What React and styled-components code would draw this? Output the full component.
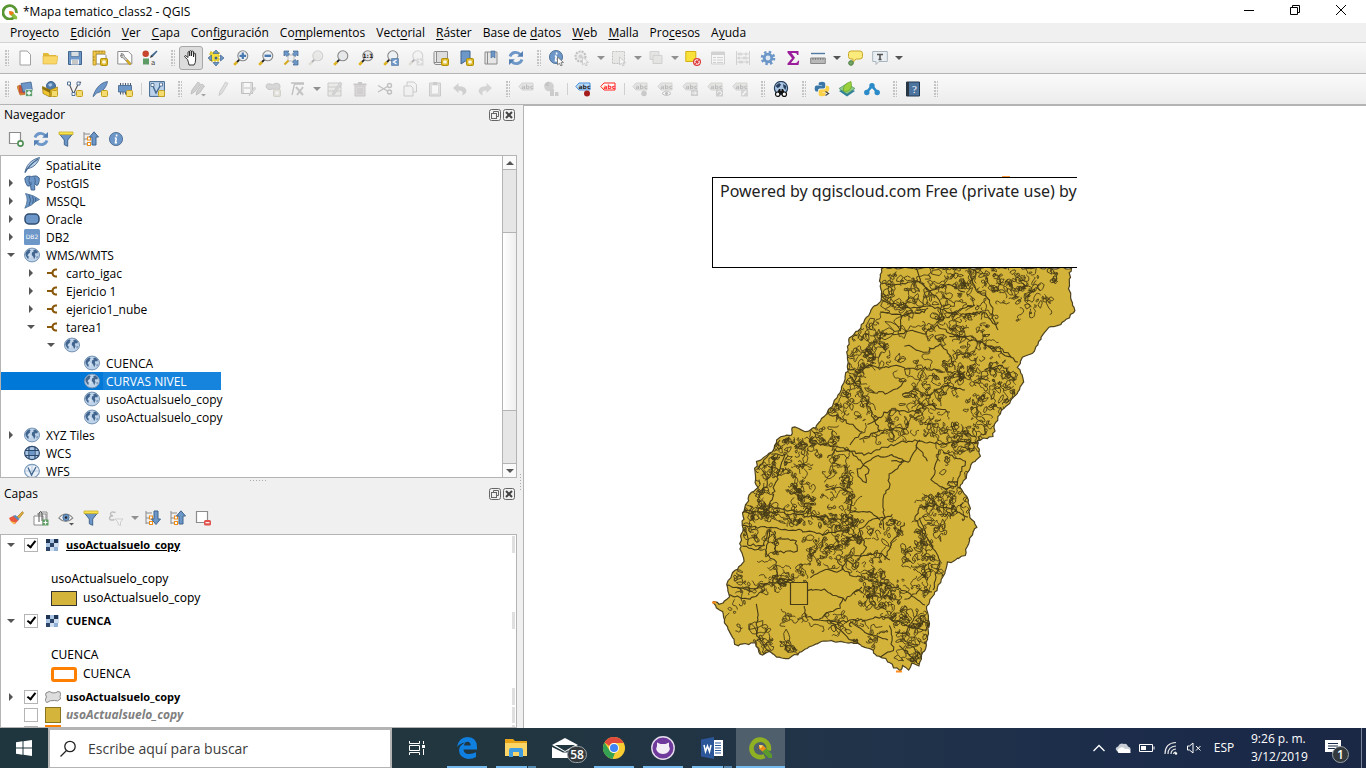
import React from "react";
import styled, { createGlobalStyle, css } from "styled-components";

const UI = `"Open Sans", "Noto Sans", sans-serif`;

const Global = createGlobalStyle`
  *, *::before, *::after { box-sizing: border-box; }
  body { margin: 0; background: #f0f0f0; font: 12px/18px ${UI}; color: #000; }
  button { border: 0; padding: 0; margin: 0; background: none; font: inherit; color: inherit; }
  svg { display: block; flex: none; }
`;

/* ---------- window frame ---------- */
const Screen = styled.div`
  display: flex;
  flex-direction: column;
  height: 100vh;
  overflow: hidden;
`;
const TitleBar = styled.header`
  display: flex;
  align-items: center;
  gap: 5px;
  height: 23px;
  padding-left: 2px;
  background: #fff;
  flex: none;
`;
const Title = styled.h1`
  flex: 1;
  margin: 0;
  font: 12px/18px ${UI};
`;
const WindowButton = styled.button`
  width: 46px;
  height: 20px;
  display: grid;
  place-items: center;
`;
const WindowButtons = styled.div`
  display: flex;
  align-self: flex-start;
  padding-right: 2px;
`;
const MenuBar = styled.nav`
  display: flex;
  gap: 11px;
  height: 19px;
  padding-left: 10px;
  flex: none;
`;
const MenuItem = styled.button`
  line-height: 20px;
  white-space: nowrap;
  u { text-underline-offset: 2px; }
`;

/* ---------- toolbars ---------- */
const ToolBar = styled.div`
  display: flex;
  align-items: center;
  gap: 1px;
  height: 31px;
  flex: none;
  border-top: 1px solid ${(p) => (p.$strong ? "#b4b4b4" : "#d4d4d4")};
  background: linear-gradient(#fafafa, #ececec);
`;
const Grip = styled.span`
  width: ${(p) => (p.$first ? 12 : 15)}px;
  height: 16px;
  padding-right: 3px;
  display: flex;
  justify-content: flex-end;
  &::after {
    content: "";
    width: 4px;
    background: radial-gradient(circle at 1px 1px, #c4c4c4 1px, transparent 1px) 0 0 / 3px 3px;
  }
`;
const Separator = styled.span`
  width: 6px;
  height: 12px;
  display: flex;
  justify-content: center;
  &::after { content: ""; width: 1px; background: #d0d0d0; }
`;
const ToolButton = styled.button`
  width: 24px;
  height: 24px;
  display: grid;
  place-items: center;
  border-radius: 3px;
  ${(p) => p.$pressed && css`background: #dcdcdc; border: 1px solid #a8a8a8;`}
  &:disabled svg { opacity: 0.32; filter: grayscale(0.85); }
`;
const DropButton = styled.button`
  width: 11px;
  height: 24px;
  display: grid;
  place-items: center;
`;

/* ---------- docks ---------- */
const Workspace = styled.main`
  display: flex;
  flex: 1;
  min-height: 0;
  border-top: 1px solid #b4b4b4;
`;
const DockArea = styled.div`
  display: flex;
  flex-direction: column;
  width: 517px;
  flex: none;
`;
const Dock = styled.section`
  display: flex;
  flex-direction: column;
  flex: ${(p) => (p.$grow ? "1 1 0" : "none")};
  min-height: 0;
`;
const DockHead = styled.header`
  display: flex;
  align-items: center;
  gap: 2px;
  height: 20px;
  padding: 0 2px 0 4px;
`;
const DockTitle = styled.h2`
  flex: 1;
  margin: 0;
  font: 12px/20px ${UI};
`;
const DockTools = styled.div`
  display: flex;
  align-items: center;
  gap: 1px;
  height: 30px;
  padding: 0 0 2px 4px;
`;
const DockBody = styled.div`
  display: flex;
  flex: ${(p) => (p.$grow ? "1 1 0" : "none")};
  height: ${(p) => (p.$grow ? "auto" : "323px")};
  min-height: 0;
  overflow: hidden;
  border: 1px solid #b4b4b4;
  background: #fff;
`;
const Tree = styled.ul`
  flex: 1;
  margin: 0;
  padding: 0;
  list-style: none;
  overflow: hidden;
`;
const TreeRow = styled.li`
  display: flex;
  align-items: center;
  width: ${(p) => (p.$selected ? "220px" : "auto")};
  height: 18px;
  padding-left: ${(p) => 2 + p.$level * 20}px;
  white-space: nowrap;
  ${(p) => p.$selected && css`
    background: #0078d7;
    color: #fff;
  `}
`;
const RowIcon = styled.span`
  width: 16px;
  margin: 0 3px 0 5px;
`;
const RowText = styled.span`
  flex: 1;
  height: 18px;
  padding-left: 3px;
  line-height: 20px;
  ${(p) => p.$selected && css`background: #1683dc;`}
`;
const Expander = styled.button`
  width: 16px;
  height: 16px;
  display: grid;
  place-items: center;
`;
const ScrollBar = styled.div`
  display: flex;
  flex-direction: column;
  width: 14px;
  border-left: 1px solid #b4b4b4;
  background: #e6e6e6;
`;
const ScrollStep = styled.button`
  height: 13px;
  display: grid;
  place-items: center;
  background: #fafafa;
`;
const ScrollTrack = styled.div`
  flex: 1;
  border: solid #b4b4b4;
  border-width: 1px 0;
  padding: 62px 0 52px;
`;
const ScrollThumb = styled.div`
  height: 100%;
  border: solid #b4b4b4;
  border-width: 1px 0;
  background: linear-gradient(90deg, #fff, #eee);
`;
const DotsRow = styled.div`
  height: 6px;
  display: flex;
  justify-content: center;
  align-items: flex-start;
  padding-top: 2px;
  &::after {
    content: "";
    width: 17px;
    height: 1px;
    background: repeating-linear-gradient(90deg, #aaa 0 1px, transparent 1px 3px);
  }
`;
const Splitter = styled.div`
  width: 6px;
  flex: none;
  display: flex;
  justify-content: center;
  padding-top: 369px;
  &::after {
    content: "";
    width: 1px;
    height: 17px;
    background: repeating-linear-gradient(#aaa 0 1px, transparent 1px 3px);
  }
`;

/* ---------- layer panel ---------- */
const LayerHead = styled.div`
  display: flex;
  align-items: center;
  height: ${(p) => (p.$compact ? 18 : 19)}px;
  padding: 1px 1px 1px 2px;
  &::after {
    content: "";
    width: 3px;
    align-self: stretch;
    background: #e0e0e0;
  }
`;
const LayerLabel = styled.label`
  flex: 1;
  padding-left: 5px;
  font-size: 11px;
  font-weight: 700;
  text-decoration: ${(p) => (p.$active ? "underline" : "none")};
  ${(p) => p.$muted && css`
    color: #808080;
    font-size: 12px;
    font-style: italic;
  `}
`;
const Check = styled.input`
  appearance: none;
  flex: none;
  width: 14px;
  height: 14px;
  margin: 0 7px 0 5px;
  display: grid;
  place-items: center;
  border: 1px solid #b4b4b4;
  background: #fff;
  &:checked::before {
    content: "";
    width: 5px;
    height: 9px;
    margin-bottom: 2px;
    border: solid #000;
    border-width: 0 2px 2px 0;
    transform: rotate(38deg);
  }
`;
const Legend = styled.div`
  padding: 15px 0 4px 50px;
  font: 12px/20px "Noto Sans", "DejaVu Sans", sans-serif;
`;
const LegendItem = styled.div`
  display: flex;
  align-items: center;
  gap: 6px;
  height: 18px;
`;
const Swatch = styled.span`
  width: 26px;
  height: 15px;
  background: ${(p) => p.$fill};
  border: ${(p) => p.$border};
  border-radius: ${(p) => (p.$round ? "3px" : "0")};
`;
const SquareSwatch = styled.span`
  display: block;
  width: 16px;
  height: 16px;
  background: ${(p) => p.$fill};
  border: ${(p) => p.$border};
`;

/* ---------- canvas ---------- */
const Canvas = styled.section`
  flex: 1;
  min-width: 0;
  overflow: hidden;
  border-left: 1px solid #b4b4b4;
  border-top: 1px solid #b4b4b4;
  background: #fff;
  padding: 71px 0 0 188px;
`;
const MapSheet = styled.div`
  position: relative;
  width: 366px;
`;
const Notice = styled.div`
  height: 91px;
  padding: 2px 0 0 7px;
  overflow: hidden;
  white-space: nowrap;
  border: 1px solid #000;
  border-right: 0;
  margin-right: 1px;
  color: #222;
  font: 16px/22px "Noto Sans", "Open Sans", sans-serif;
`;
const TopMark = styled.span`
  position: absolute;
  top: -1px;
  left: 290px;
  width: 8px;
  height: 1px;
  background: #ff9a3c;
`;

/* ---------- task bar ---------- */
const TaskBar = styled.footer`
  display: flex;
  align-items: stretch;
  height: 40px;
  flex: none;
  color: #fff;
  background: linear-gradient(90deg, #20363e, #22363f 35%, #20334a 65%, #1b2b4a 85%, #1a2745);
`;
const StartButton = styled.button`
  width: 48px;
  display: grid;
  place-items: center;
`;
const SearchBox = styled.label`
  display: flex;
  align-items: center;
  gap: 10px;
  width: 344px;
  padding-left: 10px;
  background: #fff;
  border: 2px solid #b4b4b4;
  border-bottom-width: 1px;
`;
const SearchInput = styled.input`
  flex: 1;
  min-width: 0;
  border: 0;
  outline: 0;
  background: none;
  font: 14px/20px ${UI};
  &::placeholder { color: #3c3c3c; opacity: 1; }
`;
const TaskButton = styled.button`
  position: relative;
  width: ${(p) => (p.$wide ? 50 : 49)}px;
  display: grid;
  place-items: center;
  background: ${(p) => (p.$active ? "#4f606c" : "none")};
`;
const Running = styled.span`
  position: absolute;
  bottom: 0;
  left: ${(p) => (p.$full ? "0" : "5px")};
  right: ${(p) => (p.$full ? "0" : "4px")};
  height: 2px;
  background: ${(p) => (p.$stack ? "linear-gradient(90deg, #76b9ed 0 31px, #22363f 31px 32px, #5689b0 32px)" : "#76b9ed")};
`;
const Badge = styled.span`
  position: absolute;
  left: ${(p) => p.$left}px;
  top: ${(p) => p.$top}px;
  min-width: ${(p) => (p.$wide ? 20 : 17)}px;
  height: 17px;
  border: 1px solid #9aa2a6;
  border-radius: 9px;
  background: #33393d;
  font: 600 12px/15px ${UI};
  text-align: center;
`;
const Tray = styled.div`
  display: flex;
  align-items: center;
  margin-left: auto;
`;
const TrayButton = styled.button`
  position: relative;
  width: ${(p) => p.$w || 24}px;
  height: 40px;
  display: grid;
  place-items: center;
`;
const Clock = styled.time`
  width: 54px;
  margin-left: 8px;
  text-align: center;
  white-space: nowrap;
  font: 12px/18px ${UI};
`;
const ShowDesktop = styled.button`
  width: 5px;
  height: 40px;
  border-left: 1px solid #7b8494;
`;

/* ---------- icons ---------- */
const B = "#6d97c8";
const D = "#41658d";
const G = "#8c8c8c";
const Star = () => (
  <g>
    <rect x="8.5" y="8.5" width="7" height="7" rx="1" fill="#d9b316" stroke="#b08f0a" />
    <path d="M12 9.5v5M9.8 10.8l4.4 2.4M14.2 10.8l-4.4 2.4" stroke="#fff" strokeWidth="1" />
  </g>
);
const YBox = () => <rect x="9.5" y="9.5" width="6" height="6" rx="1" fill="#f5dc72" stroke="#c3a01c" />;
const Lens = ({ fill = "#eef1f3" }) => (
  <g>
    <path d="M1.200 14.800 4 12" stroke="#e0b420" strokeWidth="2.600" />
    <path d="m4 12 2.400-2.400" stroke="#222" strokeWidth="1.800" />
    <circle cx="9.800" cy="5.800" r="5" fill={fill} stroke="#888" strokeWidth="1.100" />
  </g>
);
const Globe = () => (
  <g>
    <ellipse cx="8" cy="8" rx="7.500" ry="6.900" fill="#bfd4ea" stroke="#7593b4" strokeWidth="1" />
    <path d="M1.500 6q1.500-3 4-3.800l1.200 1.200-1 1 .3 1.200-1.800 1.400-.7 1.500 1.300 1.200-.6 2.600-1.500-2L1.500 8z" fill="#41658d" />
    <path d="M8 5.500l1.800-1L9.200 3l2.300-.5 2.500 2.300-.8 1.700-1.600-.5-.8 1.400.7 1.600-1.300 3.300-1-2.800L7.800 8z" fill="#41658d" />
    <path d="M12.500 9.500h1.600l-1.300 2z" fill="#41658d" />
    <path d="M5 7.500 7 9l-1 2" stroke="#dfe9f4" strokeWidth=".8" />
  </g>
);
const Tag = ({ c = "#c9c3a6", t = "#444", s = "#99927a" }) => (
  <g>
    <path d="M.8 5.500 4 2h11v7H4z" fill={c} stroke={s} />
    <text x="9.500" y="7.800" fontSize="6" fontWeight="700" fontFamily="DejaVu Sans" textAnchor="middle" fill={t}>abc</text>
  </g>
);
const Tree3 = ({ up }) => (
  <g>
    <path d="M1 1v13M1 3h6M1 8h4M1 13h4" stroke="#8a8a8a" fill="none" />
    <rect x="4.500" y="6" width="3" height="3" fill="#fff" stroke="#ef8c14" />
    <rect x="4.500" y="11.500" width="3" height="3" fill="#fff" stroke="#ef8c14" />
    <path d={up ? "M11 .8 15.500 6H13v8H9V6H6.500z" : "M11 14.500 15.500 9H13V1H9v8H6.500z"} fill={B} stroke={D} />
  </g>
);
const Refresh = () => (
  <g fill="none" stroke={B} strokeWidth="2.800">
    <path d="M2 6.500C3.500 2 9 1 12.500 4.500" />
    <path d="M14 9.500C12.500 14 7 15 3.500 11.500" />
    <path d="M15 1v5.800H9.200zM1 15V9.200h5.800z" fill="#5580b4" stroke="none" />
  </g>
);
const Funnel = () => (
  <g>
    <path d="M1.500 3h13L9.700 9v6.300l-3.400-1.600V9z" fill={B} stroke={D} />
    <path d="M1 1h14v2.600H1z" fill="#f7e34c" stroke="#c9ae28" strokeWidth=".8" />
  </g>
);
const Info = () => (
  <g>
    <circle cx="8" cy="8" r="6.600" fill={B} stroke={D} strokeWidth=".8" />
    <path d="M8.600 3.500v2M8.300 7l-.8 4.800h1.500M6.800 7h1.500" stroke="#fff" strokeWidth="1.600" fill="none" />
  </g>
);
const Cursor = () => <path d="m8.500 7 6 5.500-2.600.2 1.300 2.600-1.500.6-1.200-2.600-2 1.500z" fill="#fff" stroke="#777" strokeWidth=".9" />;
const Pencil = () => <path d="m4 14.500.8-4L10.500 1 13 2.500l-6 9.800z" fill="#b7b7a0" stroke="#666" strokeWidth=".8" />;
const Doc = () => <path d="M3 1h7l3.500 3.500V15H3z" fill="#fff" stroke="#a0a0a0" />;
const Q = () => (
  <g>
    <path d="M13 12.500a6.700 6.700 0 1 1 1.400-3.500" fill="none" stroke="#589632" strokeWidth="2.800" />
    <path d="m7.500 7.500 2.600.3 5 5v2.400h-2.600l-4.700-5z" fill="#8cbf3d" />
    <path d="m7 7 3.500.5 1.500 1.500-3 2.500-1.600-1.500z" fill="#ee7913" />
  </g>
);

const ICONS = {
  new: <Doc />,
  open: <g><path d="M1 3h5l1.500 2H14v9H1z" fill="#e3b93a" /><path d="M1 6h15l-1.500 8H1z" fill="#f9d768" stroke="#d9ac32" strokeWidth=".6" /></g>,
  save: <g><path d="M1.500 1.500h13v13h-13z" fill={B} stroke={D} /><path d="M4 1.500h8v5H4z" fill="#d9dee3" stroke={D} strokeWidth=".6" /><path d="M4 9.500h8v5H4z" fill="#f5f5f5" /><path d="M5 11h6M5 13h6" stroke="#999" /></g>,
  layout: <g><path d="M4 4h8.500l1.500 1.500V14H4z" fill="#fff" stroke={G} /><path d="M1 1h12v2.800H4V15H1z" fill="#efc94c" stroke="#b78f1c" strokeWidth=".8" /><path d="M4 1v1.500M7 1v1.500M10 1v1.500M1 7h1.500M1 10h1.500" stroke="#8d6d12" strokeWidth=".8" /><Star /></g>,
  layouts: <g><path d="M.8 1.500h10.500l3.500 3.500V14H.8z" fill="#fff" stroke={G} /><path d="M4 3.500q3-.5 3.500 3L13.500 13q.5 2-1.500 1.500L6.500 8Q3 8 3.500 5L5.500 6z" fill="#d8d8d8" stroke="#777" strokeWidth=".8" /><path d="m9.500 10 4 4.500" stroke="#d4a91d" strokeWidth="2.200" /></g>,
  style: <g><circle cx="3.700" cy="3.700" r="3.200" fill="#c6452c" /><path d="M1 8.500h6v6H1z" fill="#5e9c66" /><path d="m9 5.500 5.500-5 1 1L10.500 7z" fill={D} /><path d="M8 8 9 5l1.800 1.800z" fill="#333" /><text x="9" y="14.500" fontSize="7" fontFamily="DejaVu Sans" fill="#444">a</text></g>,
  hand: <path d="M4.500 9.500 2 7.200q-1-1.400.5-1.700L5 7.500V2q.8-1 1.700 0v4V1q1-1 1.800 0v5l.3-4.500q1-1 1.700 0V7l.5-3.500q1-1 1.600.2V10q0 3-1.600 5h-5Q5.500 12 4.500 9.500z" fill="#fff" stroke="#222" strokeWidth=".9" />,
  pan: <g><path d="M2 2h9v9H2z" fill="#f5dd3a" stroke="#cbb01c" strokeDasharray="2 1" /><path d="m8 0 3 3.500H5zM8 16l3-3.500H5zM0 8l3.500-3v6zM16 8l-3.500-3v6z" fill={B} stroke={D} strokeWidth=".7" /><circle cx="8" cy="8" r="1.500" fill={D} /></g>,
  zoomIn: <g><Lens /><path d="M9.800 2.500v6.600M6.500 5.800h6.600" stroke="#4a78b0" strokeWidth="2.200" /></g>,
  zoomOut: <g><Lens /><path d="M6.500 5.800h6.600" stroke="#4a78b0" strokeWidth="2.400" /></g>,
  zoomFull: <g><path d="M5 5h6v6H5z" fill="#f1f1f1" stroke="#aaa" strokeWidth=".7" /><path d="m1.500 14.500 4-4" stroke="#d4a91d" strokeWidth="2" /><path d="M1 1h5L4.800 2.200 6.500 4 4 6.500 2.200 4.800 1 6zM15 1h-5l1.200 1.200L9.500 4 12 6.500l1.800-1.700L15 6zM15 15h-5l1.200-1.200L9.500 12 12 9.500l1.800 1.700L15 10z" fill={B} stroke={D} strokeWidth=".7" /></g>,
  lensGray: <g><Lens fill="#d6d2b0" /></g>,
  lens: <Lens fill="#e6e8ea" />,
  zoom11: <g><Lens fill="#e6e6e6" /><text x="9.800" y="8.300" fontSize="6" fontWeight="700" fontFamily="DejaVu Sans" textAnchor="middle" fill="#222">1:1</text></g>,
  zoomPrev: <g><Lens /><path d="M8.500 8.500h7v7h-7z" fill={B} stroke={D} strokeWidth=".5" /><path d="m13.500 10-3 2 3 2" fill="none" stroke="#fff" strokeWidth="1.400" /></g>,
  zoomNext: <g><Lens /><path d="M8.500 8.500h7v7h-7z" fill="#aaa" /><path d="m10.500 10 3 2-3 2" fill="none" stroke="#fff" strokeWidth="1.400" /></g>,
  newMap: <g><path d="M3.500 1.500h11v11h-11z" fill="#ddd" stroke={G} /><path d="M1 2.500q0-1.500 2.500-1v11H1zM1 12.500q0 2 2 2h6" fill="#eee" stroke={G} /><Star /></g>,
  newMark: <g><path d="M3 1h9v13l-4.500-3L3 14z" fill={B} stroke={D} /><Star /></g>,
  marks: <g><path d="M2 2h12v12H2z" fill="#e6e6e6" stroke={G} /><path d="M4.500 2v12" stroke={G} /><path d="M8 1h4v7l-2-1.500L8 8z" fill={B} stroke={D} strokeWidth=".6" /></g>,
  refresh: <Refresh />,
  identify: <g><g transform="translate(-1 -1)"><Info /></g><Cursor /></g>,
  action: <g><circle cx="6.500" cy="6.500" r="5" fill="#ddd" stroke="#555" strokeWidth="2" strokeDasharray="2 1" /><circle cx="6.500" cy="6.500" r="2" fill="#888" /><Cursor /></g>,
  select: <g><path d="M1.500 1.500h12v12h-12z" fill="#d9d4a0" stroke="#555" strokeDasharray="2 1" /><Cursor /></g>,
  form: <g><path d="M2 1.500h9v8H2z" fill="#c9c49a" stroke={G} /><path d="M5 5.500h9v8H5z" fill="#c9c9b4" stroke={G} /></g>,
  deselect: <g><path d="M.8 1.500h10v10h-10z" fill="#f8e23a" stroke="#d5b012" /><circle cx="12" cy="12" r="3.400" fill="#fff" stroke="#dd3b3b" strokeWidth="1.300" /><path d="m9.800 14.200 4.500-4.500M10.500 12l1.500-1.500M12 13.500l1.500-1.500" stroke="#dd3b3b" strokeWidth="1.200" /></g>,
  table: <g><path d="M1.500 2h13v12h-13z" fill="#fff" stroke={G} /><path d="M1.500 3.500h13" stroke={G} strokeWidth="3" /><path d="M3 7.500h3M7 7.500h6M3 10h3M7 10h6M3 12.500h3M7 12.500h6" stroke={G} /></g>,
  abacus: <g><path d="M1.500 1v14M14.500 1v14M1 4h14M1 8h14M1 12h14" stroke={G} /><path d="M4 2.500v3M6 2.500v3M11 2.500v3M4 6.500v3M9 6.500v3M11 6.500v3M5 10.500v3M7 10.500v3M12 10.500v3" stroke={G} strokeWidth="1.400" /></g>,
  gear: <g><circle cx="8" cy="8" r="5.700" fill="none" stroke={B} strokeWidth="3.200" strokeDasharray="2.300 2.180" /><circle cx="8" cy="8" r="3.800" fill="#dfe9f4" stroke={B} strokeWidth="2.800" /></g>,
  sigma: <path d="M2.500 1h11v4h-1.200Q12 3 10 3H6.500L10 7.800 6 13h4.500q2 0 2.500-2.300h1.200L13.500 15h-11v-1.500L7 8.300 2.500 2.700z" fill="#9b1d9b" />,
  measure: <g><path d="M1 3.500h14" stroke="#4f7ba5" strokeWidth="1.400" /><path d="M.7 8h14.600v5.500H.7z" fill="#b9b9b9" stroke="#888" /><path d="M3 8v2M5.500 8v2M8 8v2M10.500 8v2M13 8v2" stroke="#777" strokeWidth=".8" /></g>,
  tip: <g><path d="M4 1h9q2.500 0 2.500 2.500v3Q15.500 9 13 9H9l-3 3.500V9H4Q1.500 9 1.500 6.500v-3Q1.500 1 4 1z" fill="#fbeb7c" stroke="#c9a92a" /><circle cx="4" cy="13" r="2.300" fill="#73a865" stroke="#497a40" /></g>,
  annot: <g><path d="M.7 1.500h14.600v10H7L4 14.500v-3H.7z" fill="#e9eff3" stroke="#a9b4bc" /><path d="M5 4.500h6M8 4v5.500M6.500 9.500h3" stroke="#555" strokeWidth="1.600" /></g>,
  dsm: <g><path d="M0 5.500 3 4l9 9-9 1z" fill="#dc8d30" stroke="#b26a18" strokeWidth=".6" /><path d="m2 4 4 1 4 8-8-1z" fill="#c9563c" /><path d="m4 2.500 10-1.500 1.500 9-9.500 1z" fill={B} stroke={D} strokeWidth=".8" /><rect x="8.500" y="8.500" width="7" height="7" rx="1" fill="#5f9e6d" stroke="#fff" strokeWidth=".6" /><path d="M12 9.800v4.400M9.800 12h4.400" stroke="#fff" strokeWidth="1.400" /></g>,
  gpkg: <g><circle cx="9" cy="5" r="4.500" fill="#4f7bab" stroke={D} /><path d="M6 3.500 9 2l1.500 2L8 6z" fill="#a9c5e3" /><path d="M.5 5.500 8 9v7L1 12.500zM15.500 6 8 9v7l7-3.500z" fill="#f0c530" stroke="#9a7b12" strokeWidth=".7" /><path d="M.5 5.500 8 9v3L.5 8z" fill="#8e6f0e" /><YBox /></g>,
  shp: <g><path d="M2 2.500 6.500 13 11.500 2.500 14 1" fill="none" stroke="#555" strokeWidth="1.100" /><path d="M.5 1h3v3h-3zM5 11.500h3v3H5zM10 1h3v3h-3z" fill="#fff" stroke={D} strokeWidth=".9" /><YBox /></g>,
  spatial: <g><path d="M1 15.500C3 9 7 2 15.500.5 14.500 6 11 11 4.500 12L1.500 15.500z" fill={B} stroke={D} strokeWidth=".8" /><YBox /></g>,
  lite: <g><path d="M1 15.500C2 9 6 3 15.500.5 14 6 10 10.500 4 11.500" fill="#b9d0e8" stroke={D} strokeWidth=".9" /><path d="M1 15.500Q5 8 14 2" stroke={D} fill="none" strokeWidth="1.300" /></g>,
  chip: <g><path d="M3.500 2v11.500M6 2v11.500M8.500 2v11.500M11 2v11.500M13.500 2v9" stroke="#4a5a6c" /><path d="M1.500 4.500h13v6.500h-13z" fill={B} stroke={D} strokeWidth=".8" /><YBox /></g>,
  virt: <g><path d="M.6.600h14.800v14.800H.6z" fill="#bcd2ea" stroke={D} /><path d="M3.500 4 7 12l5-8.500" fill="none" stroke={D} strokeWidth="1.400" /><path d="M2 2.500h3v3H2zM10.500 2h3v3h-3z" fill="#fff" stroke={D} strokeWidth=".8" /><YBox /></g>,
  edits: <g><path d="m1 13 1-4 6-8 2.500 2-6 8z" fill="#888" stroke="#555" /><path d="m6 14 1-4 5-7 2.500 2-5 7z" fill="#888" stroke="#555" /><path d="M11 13h5l-2.500 2.500z" fill="#000" /></g>,
  pencil: <Pencil />,
  saveEdit: <g><path d="M1.500 1.500h11v11h-11z" fill="#aaa" stroke="#555" /><path d="M4 2h6v4H4zM4 8h6v4H4z" fill="#fff" /><path d="m9 15 1-3 4.500-6L16 7.500z" fill="#aaa" stroke="#555" strokeWidth=".6" /></g>,
  addPoly: <g><path d="M1 6q0-4 4-3 3 1.500 5-.5 5-1 5 3t-4 3-6 0-4-2.500z" fill="#999" stroke="#666" /><Star /></g>,
  vertex: <g><path d="M1 2h13M2 14 4.500 3 14 3" stroke="#555" fill="none" strokeWidth="1.300" /><path d="m6 6 7 8M13 6l-6 8" stroke="#666" strokeWidth="2" /></g>,
  modify: <g><path d="M1 2h13v13H1zM1 6h13M1 10h13" fill="#ddd8a8" stroke="#777" /><path d="M5 13 13 1l2 1.500L7 14z" fill="#999" stroke="#666" strokeWidth=".6" /></g>,
  trash: <g><path d="M3 5h10v10H3z" fill="#c99" stroke="#866" /><path d="M1.500 3.500h13M6 2h4" stroke="#866" strokeWidth="1.800" /><path d="M6 7v6M8 7v6M10 7v6" stroke="#866" /></g>,
  cut: <g fill="none" stroke="#555" strokeWidth="1.400"><path d="M1 4.500 10.500 10M1 11l9.500-5.500" /><circle cx="12.500" cy="11" r="2" /><circle cx="12.500" cy="4.500" r="2" /></g>,
  copy: <g><path d="M5 1h7l2.500 2.500V11H5z" fill="#eee" stroke="#777" /><path d="M2 5h7l2 2v8H2z" fill="#eee" stroke="#777" /></g>,
  paste: <g><path d="M2.500 2h11v13h-11z" fill="#bbb" stroke="#777" /><path d="M4.500 4h7v9h-7z" fill="#fff" stroke="#888" strokeWidth=".6" /><path d="M6 1h4v3H6z" fill="#777" /></g>,
  undo: <path d="M1 7 6.500 2v3.300q8 0 8 5.200-1 3-4.500 4 2.500-5-3.500-5V12z" fill="#888" />,
  redo: <path d="M15 7 9.500 2v3.300q-8 0-8 5.200 1 3 4.500 4-2.500-5 3.500-5V12z" fill="#889888" />,
  tag: <Tag />,
  diagram: <g><circle cx="6" cy="5.500" r="4.800" fill="#888" /><path d="M6 5.500V.7a4.800 4.800 0 0 0-4.500 4z" fill="#565" /><path d="M7 8h4v7H7zM12 11h3.500v4H12z" fill="#686" /></g>,
  tagBlue: <g><Tag c="#b8dcff" t="#222" s="#4a90d8" /><circle cx="12" cy="12.500" r="3" fill="#a61c1c" /></g>,
  tagRed: <Tag c="#fff" t="#f22" s="#f22" />,
  tagPin: <g><Tag /><circle cx="12" cy="12.500" r="2.800" fill="#777" /></g>,
  tagEye: <g><Tag /><path d="M5 12.500q4.500-5 9 0-4.500 4-9 0z" fill="#fff" stroke="#555" /><circle cx="9.500" cy="12.500" r="1.400" fill="#444" /></g>,
  tagMove: <g><Tag /><path d="M9 9h7v6H9z" fill="#888" /><path d="M10 12h4M12.500 10.500 14.500 12l-2 1.500" stroke="#fff" fill="none" /></g>,
  tagRot: <g><Tag /><path d="M9 8.500h7v7H9z" fill="#888" /><path d="M10.500 12a2 2 0 1 1 2 2" stroke="#fff" fill="none" /></g>,
  tagEdit: <g><Tag /><path d="M9 8.500h7v7H9z" fill="#999" /><path d="m10.500 14 3.500-4" stroke="#fff" strokeWidth="1.600" /></g>,
  metasearch: <g><circle cx="8" cy="7" r="6.600" fill="#a9c5e3" stroke="#27405e" strokeWidth="1.200" /><path d="M2.500 5 6 2l2 1.500L6.500 6l-2 1zM10 3l3.500 2-1 4-2-2.500z" fill="#27405e" /><path d="M6 8h1.500v2h1V8H10l2.500 5h-9z" fill="#111" /><circle cx="4.700" cy="13.200" r="2.200" fill="#fff" stroke="#111" strokeWidth="1.200" /><circle cx="11.300" cy="13.200" r="2.200" fill="#fff" stroke="#111" strokeWidth="1.200" /></g>,
  python: <g><path d="M8 .8q3.200 0 3.200 2v3q0 1.700-1.700 1.700H6q-2 0-2 2v1H2.500Q.7 10.500.7 7.500t2-3h5.500V4H4.700V2.500Q4.700.8 8 .8z" fill="#3a76a8" /><path d="M8 15.200q-3.300 0-3.300-2v-2.700Q4.700 8.500 6.500 8.500h3.300q2 0 2-2.200V4.700h1.500q2 0 2 3t-2 3.500H8v.5h3.500V13q0 2.200-3.500 2.200z" fill="#fbd147" /><path d="m11.500 10.500 3 2-3 2" stroke="#444" fill="none" strokeWidth="1.200" /></g>,
  cloudPlugin: <g><path d="m0 10 8-4 8 4-8 5.500z" fill="#2f7f9c" /><path d="m0 7.500 8-5 8 5-8 5.500z" fill="#8fc98a" stroke="#3e8b5c" strokeWidth=".6" /><path d="M4.500 10Q3.500 3 12 .5q2 8-4 10z" fill="#9bd13c" stroke="#5e9a1a" strokeWidth=".6" /></g>,
  mesh: <g><path d="M2.500 11.500 8 5l5.500 6.500" fill="none" stroke="#2a8bc8" strokeWidth="2.600" /><circle cx="8" cy="4.800" r="2.700" fill="#2a8bc8" /><circle cx="2.800" cy="11.500" r="2.700" fill="#2a8bc8" /><circle cx="13.200" cy="11.500" r="2.700" fill="#2a8bc8" /></g>,
  help: <g><path d="M1.500 1h13v14h-13z" fill="#4c749f" stroke="#22384f" /><path d="M1.500 1H4v14H1.500z" fill="#2a3642" /><text x="9.500" y="12" fontSize="11" fontFamily="Liberation Serif" textAnchor="middle" fill="#fff">?</text></g>,
  addLayer: <g><path d="M1.500 1.500h11v11h-11z" fill="#fff" stroke={G} strokeWidth="1.200" /><circle cx="12.500" cy="12.500" r="2.600" fill="#fff" stroke="#4f8f55" strokeWidth="1.600" /></g>,
  funnel: <Funnel />,
  collapse: <Tree3 up />,
  expand: <Tree3 />,
  info: <Info />,
  brush: <g><path d="m9 7 5.500-5.500L15.500 3 11 8.500z" fill="#e0b040" stroke="#a87a1c" strokeWidth=".7" /><path d="m1 8 5-2.500 4.500 4.500L7 14q-4-1-6-6z" fill="#e9583c" /><path d="m5 6 5 4.500 1.500-1.500L7.500 5z" fill="#5c88bd" /><path d="m2 11 4 3.500 2-2z" fill="#f3b84f" /></g>,
  group: <g><path d="M1 6h9v9H1z" fill="#fff" stroke={G} /><path d="M4 4h9v9M7 2h7v9" fill="none" stroke={G} /><path d="M6 12V3q1.500-3 3 0v8" fill="none" stroke="#555" /><rect x="9.500" y="9.500" width="6" height="6" fill="#5e9e62" /><path d="M12.500 10.500v4M10.500 12.500h4" stroke="#fff" strokeWidth="1.200" /></g>,
  eye: <g><path d="M.8 8q7-8 14 0-7 7-14 0z" fill="#fff" stroke="#888" strokeWidth="1.100" /><circle cx="8" cy="7.500" r="3.200" fill={B} stroke={D} strokeWidth=".8" /><circle cx="8" cy="7.500" r="1.200" fill="#222" /><path d="M11 13h5l-2.500 2.500z" fill="#555" /></g>,
  expr: <g><path d="M7.500 2.500Q2.500 1 2.500 4q0 1.500 2.500 1.700Q1.500 6 1.500 8.300 2 11 6.500 9.500" stroke="#555" strokeWidth="1.400" /><path d="M7 9h8l-2.500 3v3.500l-2.500-1V12z" fill="#fff" stroke="#888" /></g>,
  remove: <g><path d="M1.500 1.500h11v11h-11z" fill="#fff" stroke={G} strokeWidth="1.200" /><rect x="9" y="10" width="7" height="5.500" rx="1.500" fill="#e2504c" /><path d="M10.500 12.700h4" stroke="#fff" strokeWidth="1.200" /></g>,
  elephant: <g><path d="M.8 3.500Q2 .5 6 1.200q1.500.8 3 0Q13 0 15.200 3q.5 3.500-1.200 6.800l-1.500.7-1-1.500-.8 1.500v4.500H7.200l-.7-4.500-1.500.5L3.500 11Q.8 7 .8 3.500z" fill={B} stroke={D} /><path d="M5.500 2Q4 6 6 9.500l1 .5V7M10.500 2.500q1.500 3 .3 6.500" fill="none" stroke={D} /></g>,
  mssql: <g><path d="M1.500.500Q10 2 15.500 6.500q-4 1.500-8 5.500L.8 15.200Q5 7 1.500.500z" fill={B} stroke={D} strokeWidth=".7" /><path d="M5 2q3 5 0 10.500M8.500 3.500q2 3 0 7M11.500 5q1 2-.5 4" stroke="#36577c" fill="none" strokeWidth=".9" /></g>,
  oracle: <rect x="1" y="3" width="14" height="10" rx="4" fill={B} stroke="#2f4d70" strokeWidth="1.500" />,
  db2: <g><rect x="0" y="0" width="16" height="16" rx="1.500" fill={B} /><text x="8" y="10" fontSize="6" fontFamily="DejaVu Sans" textAnchor="middle" fill="#fff">DB2</text></g>,
  globe: <Globe />,
  conn: <path d="M3 8h6M13 4.500h-1.500Q8.500 5 8.500 8t3 3.500H13" fill="none" stroke="#8a5607" strokeWidth="2" />,
  wcs: <g><ellipse cx="8" cy="8" rx="7.400" ry="6.600" fill="#a9c5e3" stroke="#2c486b" strokeWidth="1.200" /><path d="M1 5.500h14M1 10.500h14M5 2v12M11 2v12" stroke="#2c486b" strokeWidth="1.200" /><path d="M5.500 6h5v4h-5z" fill="#6d97c8" /></g>,
  wfs: <g><ellipse cx="8" cy="8" rx="7.400" ry="6.600" fill="#eaf1f8" stroke="#7a98b9" strokeWidth="1.100" /><path d="M1 8h14M8 1.500v13" stroke="#a9c0d8" strokeWidth=".8" /><path d="M4 4.500 7.500 12 12 4" fill="none" stroke={D} strokeWidth="1.300" /></g>,
  raster: <g><path d="M1 2h4v4H1zM9 2h4v4H9z" fill="#1f3352" /><path d="M5 2h4v4H5zM1 6h4v4H1zM13 2h1v4h-1z" fill="#a9c3e2" /><path d="M5 6h4v4H5zM1 10h4v4H1z" fill="#2c4468" /><path d="M9 6h5v4H9zM5 10h4v4H5z" fill="#cfdff0" /><path d="M9 10h4v4H9z" fill="#8fb0d6" /></g>,
  polygon: <path d="M1 4q3-3 7 0 3 0 5-1.500 3 0 2.500 3-1 2 0 4.500-3 3-6 1.500Q5 11 2 13.500-1 12 1.500 8 0 6 1 4z" fill="#ddd" stroke="#888" />,
};

const Icon = ({ name, size = 16 }) => (
  <svg width={size} height={size} viewBox="0 0 16 16" fill="none" aria-hidden="true">{ICONS[name]}</svg>
);
const Caret = ({ color = "#555", dir = "down" }) => (
  <svg width="8" height="8" viewBox="0 0 8 8" aria-hidden="true">
    <path d={{ down: "M0 2h8L4 6z", up: "M0 6h8L4 2z", right: "M2 0v8l4-4z" }[dir]} fill={color} />
  </svg>
);

/* ---------- toolbar contents: "-" disabled, "!" pressed, "|" grip, "/" separator, "v" drop-down, "w" dimmed drop-down ---------- */
const ROW_ONE = "| new open save layout layouts style | !hand pan zoomIn zoomOut zoomFull -lensGray lens zoom11 zoomPrev -zoomNext newMap newMark marks refresh | identify -action w -select w -form w deselect -table -abacus gear sigma measure v tip annot v".split(" ");
const ROW_TWO = "| dsm gpkg shp spatial chip / virt | -edits -pencil -saveEdit -addPoly -vertex w -modify -trash -cut -copy -paste -undo -redo | -tag -diagram / tagBlue tagRed / -tagPin -tagEye -tagMove -tagRot -tagEdit | metasearch | python cloudPlugin mesh | help |".split(" ");

const Tools = ({ items }) =>
  items.map((item, i) => {
    if (item === "|") return <Grip key={i} $first={i === 0} />;
    if (item === "/") return <Separator key={i} />;
    if (item === "v" || item === "w") {
      return <DropButton key={i} aria-label="Más opciones"><Caret color={item === "w" ? "#909090" : "#555"} /></DropButton>;
    }
    const off = item[0] === "-";
    const on = item[0] === "!";
    const name = off || on ? item.slice(1) : item;
    return (
      <ToolButton key={i} disabled={off} $pressed={on} aria-label={name}>
        <Icon name={name} />
      </ToolButton>
    );
  });

const MENUS = ["Pro_yecto", "_Edición", "_Ver", "_Capa", "Con_figuración", "Co_mplementos", "Vect_orial", "_Ráster", "Base de _datos", "_Web", "_Malla", "Pro_cesos", "A_yuda"];
const Mnemonic = ({ text }) => {
  const i = text.indexOf("_");
  return <>{text.slice(0, i)}<u>{text[i + 1]}</u>{text.slice(i + 2)}</>;
};

const SOURCES = [
  [0, "", "lite", "SpatiaLite"],
  [0, "right", "elephant", "PostGIS"],
  [0, "right", "mssql", "MSSQL"],
  [0, "right", "oracle", "Oracle"],
  [0, "right", "db2", "DB2"],
  [0, "down", "globe", "WMS/WMTS"],
  [1, "right", "conn", "carto_igac"],
  [1, "right", "conn", "Ejericio 1"],
  [1, "right", "conn", "ejericio1_nube"],
  [1, "down", "conn", "tarea1"],
  [2, "down", "globe", ""],
  [3, "", "globe", "CUENCA"],
  [3, "", "globe", "CURVAS NIVEL", true],
  [3, "", "globe", "usoActualsuelo_copy"],
  [3, "", "globe", "usoActualsuelo_copy"],
  [0, "right", "globe", "XYZ Tiles"],
  [0, "", "wcs", "WCS"],
  [0, "", "wfs", "WFS"],
];

const PanelHead = ({ title }) => (
  <DockHead>
    <DockTitle>{title}</DockTitle>
    <button aria-label="Desacoplar">
      <svg width="12" height="12" viewBox="0 0 12 12" fill="none" stroke="#666" aria-hidden="true">
        <rect x=".5" y=".5" width="11" height="11" rx="2" /><path d="M4.500 4.500v-2h5v5h-2" /><rect x="2.500" y="4.500" width="5" height="5" />
      </svg>
    </button>
    <button aria-label="Cerrar">
      <svg width="12" height="12" viewBox="0 0 12 12" fill="none" stroke="#666" aria-hidden="true">
        <rect x=".5" y=".5" width="11" height="11" rx="2" /><path d="m3 3 6 6M9 3 3 9" stroke="#444" strokeWidth="2" />
      </svg>
    </button>
  </DockHead>
);

const Browser = () => (
  <Dock>
    <PanelHead title="Navegador" />
    <DockTools><Tools items={["addLayer", "refresh", "funnel", "collapse", "info"]} /></DockTools>
    <DockBody>
      <Tree>
        {SOURCES.map(([level, dir, icon, text, selected], i) => (
          <TreeRow key={i} $level={level} $selected={selected}>
            <Expander aria-label={text} disabled={!dir}>{dir && <Caret dir={dir} />}</Expander>
            <RowIcon><Icon name={icon} /></RowIcon>
            <RowText $selected={selected}>{text}</RowText>
          </TreeRow>
        ))}
      </Tree>
      <ScrollBar>
        <ScrollStep aria-label="Subir"><Caret dir="up" /></ScrollStep>
        <ScrollTrack><ScrollThumb /></ScrollTrack>
        <ScrollStep aria-label="Bajar"><Caret /></ScrollStep>
      </ScrollBar>
    </DockBody>
  </Dock>
);

const Layer = ({ id, dir, checked, active, muted, compact, name, children }) => (
  <LayerHead $compact={compact}>
    <Expander aria-label={name} disabled={!dir}>{dir && <Caret dir={dir} />}</Expander>
    <Check type="checkbox" id={id} defaultChecked={checked} />
    {children}
    <LayerLabel htmlFor={id} $active={active} $muted={muted}>{name}</LayerLabel>
  </LayerHead>
);

const Layers = () => (
  <Dock $grow>
    <PanelHead title="Capas" />
    <DockTools><Tools items={["brush", "group", "eye", "funnel", "-expr", "w", "expand", "collapse", "remove"]} /></DockTools>
    <DockBody $grow>
      <Tree as="div">
        <Layer id="l1" dir="down" checked active name="usoActualsuelo_copy"><Icon name="raster" /></Layer>
        <Legend>
          usoActualsuelo_copy
          <LegendItem><Swatch $fill="#d5b43c" $border="1px solid #333" />usoActualsuelo_copy</LegendItem>
        </Legend>
        <Layer id="l2" dir="down" checked name="CUENCA"><Icon name="raster" /></Layer>
        <Legend>
          CUENCA
          <LegendItem><Swatch $fill="#fff" $border="3px solid #ff7f00" $round />CUENCA</LegendItem>
        </Legend>
        <Layer id="l3" dir="right" checked name="usoActualsuelo_copy"><Icon name="polygon" /></Layer>
        <Layer id="l4" compact muted name="usoActualsuelo_copy"><SquareSwatch $fill="#d5b43c" $border="1px solid #8a7420" /></Layer>
        <Layer id="l5" compact muted checked name=""><SquareSwatch $fill="#fff" $border="3px solid #ff7f00" /></Layer>
      </Tree>
    </DockBody>
  </Dock>
);

/* ---------- map drawing ---------- */
const EDGE = [882,268,880,283,882,300,873,308,867,317,860,328,850,338,847,352,848,368,843,385,837,398,828,411,815,427,807,432,793,427,792,435,778,438,772,452,757,462,755,472,757,488,750,495,743,513,743,528,740,543,743,562,733,573,726,585,730,597,720,604,713,602,715,606,722,612,725,623,730,632,735,645,755,643,760,655,770,652,782,659,792,657,807,648,823,641,840,642,857,644,873,650,877,657,883,657,892,665,899,671,903,665,908,669,912,664,918,665,923,653,927,640,929,623,927,607,935,592,943,577,948,563,965,555,970,538,976,527,971,517,967,497,960,488,968,473,972,463,981,456,977,447,978,440,993,437,996,422,1003,410,1018,392,1024,381,1018,367,1022,358,1033,353,1042,337,1048,328,1060,325,1075,311,1071,297,1069,285,1071,268];

/* centre x, centre y, radius x, radius y, number of parcels, parcel size */
const CLUSTERS = [
  [925,282,42,14,52,5],[1000,280,40,13,80,4],[1025,298,32,12,46,4],[1050,278,16,10,10,4],[905,300,30,14,36,5],[955,305,35,17,50,5],
  [870,330,15,16,26,5],[975,328,26,14,40,4],[940,330,25,12,18,5],[900,325,25,12,8,9],[862,355,14,18,38,4],[885,355,20,12,22,4],
  [975,362,30,18,70,4],[1000,385,18,20,44,4],[955,380,22,18,38,4],[915,375,20,18,20,5],[858,390,14,18,38,4],[845,412,14,14,30,4],
  [925,400,26,14,44,4],[985,410,20,20,46,4],[890,418,35,10,34,4],[935,425,28,10,44,4],[965,432,22,9,30,4],[820,440,20,12,44,4],[880,434,30,8,22,4],
  [800,445,14,12,30,4],[775,460,14,16,46,3],[765,485,10,22,38,3],[797,478,7,26,38,3],[805,495,12,14,34,3],[838,470,12,16,24,4],[842,498,14,16,34,4],
  [758,512,16,8,42,3],[795,517,36,7,60,3],[840,523,26,9,40,4],[757,530,14,10,16,5],[830,540,28,8,26,4],[862,530,14,12,20,5],
  [818,555,14,12,32,3],[845,550,20,14,22,4],[770,560,8,22,18,4],[740,583,10,12,20,4],[775,584,20,6,24,4],[800,575,14,8,16,4],
  [870,565,18,14,30,4],[885,585,20,14,50,3],[915,555,16,16,40,4],[930,575,12,18,22,5],[892,535,12,16,26,4],[930,530,14,18,26,5],
  [940,505,20,12,54,4],[960,498,10,14,20,4],[950,470,14,18,10,9],[975,445,8,6,8,4],[960,447,20,6,20,4],
  [885,605,22,10,38,4],[905,620,20,14,36,4],[845,625,22,8,24,4],[795,622,14,6,14,4],[765,640,8,14,18,4],[788,642,10,10,12,5],
  [750,620,12,12,6,7],[905,648,16,14,24,5],[920,630,8,16,18,4],[868,638,16,6,14,4],[735,605,12,10,8,4],
];

const ROADS = [
  [882,333,895,334,912,331,925,333,937,326,950,333,962,337,980,342,1000,352,1018,362],
  [950,336,970,336,985,345,1000,348,1012,358],
  [848,368,858,372,868,366,880,368,895,366,905,368],
  [873,392,885,393,897,389,905,380],
  [820,443,840,447,865,455,885,447,900,443,915,440,940,444,960,442,977,442],
  [852,452,868,470,865,482,860,480,858,470,875,457,892,455,905,460,890,475,889,485,882,500,884,515,884,530],
  [892,462,910,461,915,452,917,443],
  [772,455,785,455,775,485,770,507,800,512,812,507],
  [743,513,765,512,790,514,820,517,842,520],
  [743,526,770,528,795,530,825,534,850,530],
  [775,531,775,552,796,552,796,540,775,540],
  [770,530,766,555,776,562,777,580],
  [727,585,745,590,770,583,790,583],
  [808,590,825,590,845,600,855,592,862,587],
  [811,577,825,570,840,572,848,560,855,568],
  [805,605,806,617,820,620,835,622,860,620,885,617,905,625,927,630],
  [820,620,828,612,840,608,843,598],
  [757,605,757,635,770,655],
  [940,450,932,480,945,490,955,487,965,462,950,455,943,452],
  [905,523,890,545,885,560],[855,556,880,553,890,560],[920,518,926,535,940,560,933,590],
  [835,558,850,575,870,580,905,590,925,605],
  [890,625,893,650,880,657],[900,645,917,663],[905,640,920,655],
  [901,315,925,312,928,308],[901,330,901,315,880,312],[828,413,845,420,862,432,850,445],
  [893,515,870,520,860,530,866,548,858,560],
  [757,470,768,455,780,440],[762,495,770,475,778,455],[850,375,862,392,870,410,880,432],
  [882,284,900,285,915,280,930,290,950,285,965,292],[880,300,905,308,930,305,950,313,975,305],
  [915,268,922,285,940,300,942,315],[970,270,975,290,990,300,995,325],[960,315,985,312,998,330],
  [905,345,925,352,940,345,950,355,955,370],[905,370,925,368,945,372],[903,395,915,390,930,395,945,385,965,390],
  [868,425,890,410,915,412,930,405,950,412],[860,440,880,430,905,428],[985,370,1002,365,1015,380],
  [828,458,835,450,850,452],[826,490,840,487,852,495,850,512],[850,512,870,512,880,520],
  [745,528,748,545,762,545,768,530],[743,545,755,550,765,545],[928,460,915,445,920,440],
  [925,535,915,520,920,508,935,505,955,510,968,517],[905,600,920,590,932,592],[730,595,750,600,765,590],
  [830,620,850,640,860,645],[855,625,870,635,888,640],[918,612,905,635,895,632],
];

const makeRandom = (seed) => () => {
  seed = (seed * 1664525 + 1013904223) % 4294967296;
  return seed / 4294967296;
};

const roughen = (pts, amount, rnd, closed) => {
  const out = [];
  const n = pts.length / 2;
  for (let i = 0; i < (closed ? n : n - 1); i++) {
    const x1 = pts[i * 2], y1 = pts[i * 2 + 1];
    const j = (i + 1) % n;
    const x2 = pts[j * 2], y2 = pts[j * 2 + 1];
    const steps = Math.max(2, Math.round(Math.hypot(x2 - x1, y2 - y1) / 3));
    for (let k = 0; k < steps; k++) {
      const t = k / steps;
      out.push(`${(x1 + (x2 - x1) * t + (rnd() - 0.5) * amount).toFixed(1)} ${(y1 + (y2 - y1) * t + (rnd() - 0.5) * amount).toFixed(1)}`);
    }
  }
  if (!closed) out.push(`${pts[pts.length - 2]} ${pts[pts.length - 1]}`);
  return `M${out.join("L")}${closed ? "Z" : ""}`;
};

const wander = (rnd, x, y, steps, stride, turn) => {
  let heading = rnd() * Math.PI * 2;
  let bend = 0;
  let path = `M${x.toFixed(1)} ${y.toFixed(1)}`;
  for (let k = 0; k < steps; k++) {
    bend = bend * 0.5 + (rnd() - 0.5) * turn;
    heading += bend;
    x += Math.cos(heading) * stride;
    y += Math.sin(heading) * stride;
    path += `L${x.toFixed(1)} ${y.toFixed(1)}`;
  }
  return path;
};

const parcels = () => {
  const rnd = makeRandom(29);
  const d = [];
  CLUSTERS.forEach(([cx, cy, rx, ry, count, size]) => {
    for (let i = 0; i < count * 0.6; i++) {
      const a = rnd() * Math.PI * 2;
      const r = Math.sqrt(rnd());
      const x = cx + Math.cos(a) * r * rx;
      const y = cy + Math.sin(a) * r * ry;
      if (rnd() < 0.62) {
        d.push(wander(rnd, x, y, 6 + Math.floor(rnd() * size * 4), 1.7, 2.6));
        continue;
      }
      const s = size * (0.3 + rnd() * 0.8);
      const tilt = rnd() * Math.PI;
      const squash = 0.3 + rnd() * 0.5;
      const n = 6 + Math.floor(rnd() * 5);
      const pts = [];
      for (let k = 0; k < n; k++) {
        const t = (k / n) * Math.PI * 2;
        const q = s * (0.5 + rnd() * 0.9);
        const px = Math.cos(t) * q, py = Math.sin(t) * q * squash;
        pts.push(`${(x + px * Math.cos(tilt) - py * Math.sin(tilt)).toFixed(1)} ${(y + px * Math.sin(tilt) + py * Math.cos(tilt)).toFixed(1)}`);
      }
      d.push(`M${pts.join("L")}Z`);
    }
  });
  return d.join("");
};

const outline = roughen(EDGE, 2.2, makeRandom(7), true);
const roads = ROADS.map((r, i) => roughen(r, 2.6, makeRandom(i + 3), false)).join("");
const parcelLines = parcels();

const Basin = () => (
  <svg width="366" height="406" viewBox="712 268 366 406" fill="none" role="img" aria-label="Mapa de uso actual del suelo">
    <clipPath id="basin"><path d={outline} /></clipPath>
    <path d={outline} fill="#d4b33a" stroke="#4c4220" strokeWidth="1.200" />
    <g clipPath="url(#basin)" stroke="#463b18" strokeLinejoin="round">
      <path d={parcelLines} strokeWidth=".9" />
      <path d={roads} strokeWidth="1.100" />
      <path d="M790.500 582.500h17v22h-17z" fill="#d4b33a" strokeWidth="1.200" />
    </g>
    <path d="M712 602.500h4M896 671.500h6" stroke="#ff8c1a" strokeWidth="2" />
  </svg>
);

/* ---------- task bar pictures ---------- */
const TASK_ICONS = {
  view: <svg width="18" height="18" viewBox="0 0 18 18" fill="none" stroke="#fff" aria-hidden="true"><path d="M1.500 2v2.500h10V2M1.500 16v-2.500h10V16M1.500 6.500h10v5h-10zM15.500 2v3M15.500 10v6" /><path d="M14 6h3v3h-3z" fill="#fff" stroke="none" /></svg>,
  edge: <svg width="20" height="22" viewBox="0 0 20 22" aria-hidden="true"><path d="M0 10Q2 0 10.500 0 20 .500 20 10v2.500H6.500Q7 17 12 17q3.500 0 7-1.800V20Q16 22 11 22 2.500 21 2 13.500 2 8.500 8 5.500 3 6 0 10zm7-1.500h6.700Q13.500 4.700 10.500 4.700T7 8.500z" fill="#0f7fe0" /></svg>,
  folder: <svg width="22" height="20" viewBox="0 0 22 20" aria-hidden="true"><path d="M0 1h8l2 2h12v15H0z" fill="#e8a317" /><path d="M0 5h22v13H0z" fill="#fbd667" /><path d="M4 19v-7q0-2 2-2h10q2 0 2 2v7h-4v-5H8v5z" fill="#3f9de0" /></svg>,
  mail: <svg width="26" height="20" viewBox="0 0 26 20" aria-hidden="true"><path d="M0 7 13 0l13 7-13 7z" fill="#fff" /><path d="M0 9l11 5.500H26V20H0z" fill="#fff" /><path d="m3 7 10 6 10-6z" fill="#22363f" /></svg>,
  chrome: <svg width="22" height="22" viewBox="0 0 22 22" aria-hidden="true"><circle cx="11" cy="11" r="11" fill="#f8cc32" /><path d="M11 0a11 11 0 0 1 9.800 6H11a5 5 0 0 0-4.600 3L1.500 5.500A11 11 0 0 1 11 0z" fill="#e24a3b" /><path d="M1.500 5.500 6.600 13.500A5 5 0 0 0 12 16l-2.500 6A11 11 0 0 1 1.500 5.500z" fill="#35a253" /><circle cx="11" cy="11" r="5" fill="#fff" /><circle cx="11" cy="11" r="4" fill="#4285f4" /></svg>,
  github: <svg width="24" height="24" viewBox="0 0 24 24" aria-hidden="true"><circle cx="12" cy="12" r="11.200" fill="#6f3a9c" stroke="#e5dcec" strokeWidth="1.400" /><path d="M6 6.500 9.500 8h5L18 6.500V10q1.500 2.500 0 5-2 3-6 3t-6-3q-1.500-2.500 0-5z" fill="#f3eef6" /></svg>,
  word: <svg width="22" height="22" viewBox="0 0 22 22" aria-hidden="true"><path d="M11 3h11v16H11z" fill="#fff" /><path d="M14 6h6M14 8.500h6M14 11h6M14 13.500h6M14 16h6" stroke="#2b579a" /><path d="M0 2.500 13 0v22L0 19.500z" fill="#2b579a" /><path d="m3 8 1.500 6.500L6.500 9l2 5.500L10 8" stroke="#fff" strokeWidth="1.500" fill="none" /></svg>,
  qgis: <svg width="24" height="24" viewBox="0 0 24 24" fill="none" aria-hidden="true"><path d="M15.500 19.900A8.700 8.700 0 1 1 19.600 14.500" stroke="#8eb022" strokeWidth="4.600" /><path d="m11 9 3.500.5L23 18.500V22h-3.500L11 13.500z" fill="#5b9a2c" /><path d="m10 9 4 .5 3 3-3.500 3L10 12.500z" fill="#f08a1c" /><path d="m10 9 4 .5-2.500 3z" fill="#fbe36a" /></svg>,
};

const TASKS = [
  { id: "view", label: "Vista de tareas", wide: true },
  { id: "edge", label: "Edge", run: true },
  { id: "folder", label: "Explorador", run: true, stack: true },
  { id: "mail", label: "Correo", badge: "58" },
  { id: "chrome", label: "Chrome", run: true },
  { id: "github", label: "GitHub", run: true },
  { id: "word", label: "Word", run: true, stack: true },
  { id: "qgis", label: "QGIS", run: true, active: true },
];

const Taskbar = () => (
  <TaskBar>
    <StartButton aria-label="Inicio">
      <svg width="16" height="16" viewBox="0 0 16 16" fill="#fff" aria-hidden="true"><path d="M0 2.200 6.500 1.300v6.200H0zM7.500 1.200 16 0v7.500H7.500zM0 8.500h6.500v6.200L0 13.800zM7.500 8.500H16V16l-8.500-1.200z" /></svg>
    </StartButton>
    <SearchBox>
      <svg width="16" height="18" viewBox="0 0 16 18" fill="none" stroke="#222" strokeWidth="1.300" aria-hidden="true"><circle cx="10" cy="6.500" r="5.200" /><path d="m6.500 10.500-6 6" /></svg>
      <SearchInput type="text" placeholder="Escribe aquí para buscar" aria-label="Buscar" />
    </SearchBox>
    {TASKS.map((t) => (
      <TaskButton key={t.id} aria-label={t.label} $wide={t.wide} $active={t.active}>
        {TASK_ICONS[t.id]}
        {t.badge && <Badge $wide $left={27} $top={18}>{t.badge}</Badge>}
        {t.run && <Running $full={t.active} $stack={t.stack} />}
      </TaskButton>
    ))}
    <Tray>
      <TrayButton aria-label="Iconos ocultos"><svg width="12" height="8" viewBox="0 0 12 8" fill="none" stroke="#fff" strokeWidth="1.300" aria-hidden="true"><path d="m.5 7 5.500-5.500L11.500 7" /></svg></TrayButton>
      <TrayButton aria-label="OneDrive"><svg width="16" height="10" viewBox="0 0 16 10" aria-hidden="true"><path d="M2 8Q-1 5 3 3.500 5-1 9 1q3-1 4 2.500 4 1 2 5z" fill="#c9ced4" /><path d="M3.500 10Q1 7.500 4 5.500 8 3 10 6q6-1 5.500 4z" fill="#fff" /></svg></TrayButton>
      <TrayButton aria-label="Batería"><svg width="16" height="10" viewBox="0 0 16 10" fill="none" stroke="#fff" aria-hidden="true"><path d="M.5 1.500h13v7H.5zM15 3.500v3" /><path d="M2 3h5v4H2z" fill="#fff" stroke="none" /></svg></TrayButton>
      <TrayButton aria-label="Red"><svg width="14" height="14" viewBox="0 0 14 14" fill="none" stroke="#e8e8e8" strokeWidth="1.200" aria-hidden="true"><path d="M1 13Q1 2 12 1.500M4 13q0-7.500 8-8M7 13q0-4.500 5-5M9.500 13q.5-2 2.500-2" /><circle cx="12" cy="12.500" r="1.200" fill="#fff" stroke="none" /></svg></TrayButton>
      <TrayButton aria-label="Volumen" $w={22}><svg width="16" height="12" viewBox="0 0 16 12" fill="none" stroke="#fff" aria-hidden="true"><path d="M1.500 4h2L7 1v10L3.500 8h-2zM10 4l4.500 4.500M14.500 4 10 8.500" /></svg></TrayButton>
      <TrayButton $w={38}>ESP</TrayButton>
      <Clock>9:26 p. m.<br />3/12/2019</Clock>
      <TrayButton aria-label="Notificaciones" $w={56}>
        <svg width="16" height="16" viewBox="0 0 16 16" aria-hidden="true"><path d="M0 0h16v12h-5v4l-4-4H0z" fill="#fff" /><path d="M3 3.500h10M3 6h10M3 8.500h7" stroke="#1b2a49" /></svg>
        <Badge $left={27} $top={18}>1</Badge>
      </TrayButton>
      <ShowDesktop aria-label="Mostrar escritorio" />
    </Tray>
  </TaskBar>
);

export default function App() {
  return (
    <Screen>
      <Global />
      <TitleBar>
        <svg width="16" height="16" viewBox="0 0 16 16" fill="none" aria-hidden="true"><Q /></svg>
        <Title>*Mapa tematico_class2 - QGIS</Title>
        <WindowButtons>
          <WindowButton aria-label="Minimizar"><svg width="10" height="10" viewBox="0 0 10 10" stroke="#000" aria-hidden="true"><path d="M0 5.500h10" /></svg></WindowButton>
          <WindowButton aria-label="Restaurar"><svg width="10" height="10" viewBox="0 0 10 10" stroke="#000" fill="none" aria-hidden="true"><path d="M.5 2.500h7v7h-7zM2.500 2.500v-2h7v7h-2" /></svg></WindowButton>
          <WindowButton aria-label="Cerrar"><svg width="10" height="10" viewBox="0 0 10 10" stroke="#000" aria-hidden="true"><path d="m0 0 10 10M10 0 0 10" /></svg></WindowButton>
        </WindowButtons>
      </TitleBar>
      <MenuBar>{MENUS.map((m) => <MenuItem key={m}><Mnemonic text={m} /></MenuItem>)}</MenuBar>
      <ToolBar><Tools items={ROW_ONE} /></ToolBar>
      <ToolBar $strong><Tools items={ROW_TWO} /></ToolBar>
      <Workspace>
        <DockArea>
          <Browser />
          <DotsRow />
          <Layers />
        </DockArea>
        <Splitter />
        <Canvas>
          <MapSheet>
            <TopMark />
            <Notice>Powered by qgiscloud.com Free (private use) by</Notice>
            <Basin />
          </MapSheet>
        </Canvas>
      </Workspace>
      <Taskbar />
    </Screen>
  );
}
